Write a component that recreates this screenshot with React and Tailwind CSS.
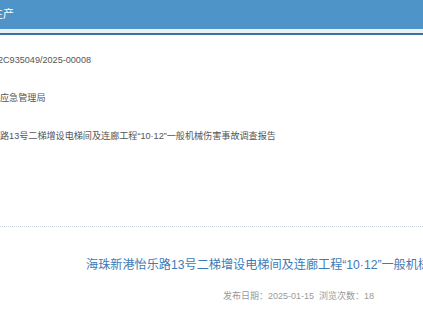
import React from "react";

const font = { fontFamily: '"Liberation Sans", "Noto Sans CJK SC", sans-serif' };

export default function App() {
  const rows = [
    "2C935049/2025-00008",
    "应急管理局",
    "路13号二梯增设电梯间及连廊工程“10·12”一般机械伤害事故调查报告",
  ];

  return (
    <div
      className="w-[423px] h-[318px] overflow-hidden bg-white"
      style={font}
    >
      {/* header bar */}
      <div className="h-[29px] bg-[#4f94c8] flex items-center overflow-hidden">
        <span className="ml-[-30px] text-[11px] text-white whitespace-nowrap">
          安全生产
        </span>
      </div>
      <div className="h-[4px] bg-[#e8f1f8]" />
      <div className="h-[2px] bg-[#3f709e]" />

      {/* info rows */}
      <div className="mt-[7px] flex flex-col">
        {rows.map((text, i) => (
          <div
            key={i}
            className={
              "h-[38px] flex items-center whitespace-nowrap text-[9.1px] text-[#555] " +
              (i === 0 ? "ml-[-2px]" : "ml-0")
            }
          >
            {text}
          </div>
        ))}
      </div>

      <div className="mt-[70px] border-t border-dotted border-[#c6d6e4]" />

      {/* title */}
      <div className="mt-[30px] pl-[86px] whitespace-nowrap text-[12.15px] leading-[16px] text-[#3d7ab6]">
        海珠新港怡乐路13号二梯增设电梯间及连廊工程“10·12”一般机械伤害事故调查报告
      </div>

      <div className="mt-[17px] pl-[223px] whitespace-nowrap text-[9px] leading-[12px] text-[#9a9a9a]">
        发布日期：2025-01-15&nbsp;&nbsp;浏览次数：18
      </div>
    </div>
  );
}
